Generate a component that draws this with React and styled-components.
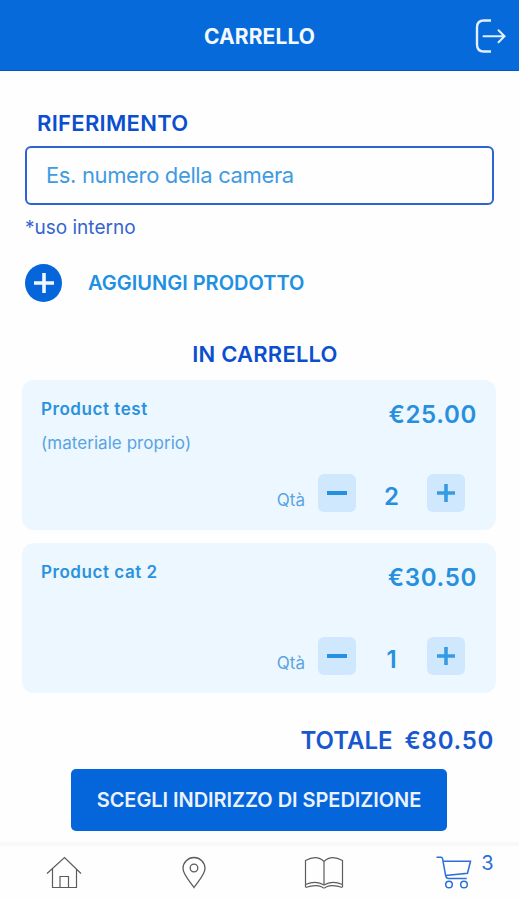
import React, { useState } from "react";
import styled, { createGlobalStyle } from "styled-components";

const GlobalStyle = createGlobalStyle`
    * {
        box-sizing: border-box;
    }

    body {
        margin: 0;
        background: #fefefe;
        font-family: Inter, "Liberation Sans", sans-serif;
    }

    button {
        font-family: inherit;
        border: none;
        padding: 0;
    }
`;

const Screen = styled.div`
    display: flex;
    flex-direction: column;
    width: 519px;
    height: 900px;
    overflow: hidden;
`;

const Header = styled.header`
    display: grid;
    grid-template-columns: 60px 1fr 60px;
    align-items: center;
    flex: none;
    height: 71px;
    padding-top: 2px;
    background: #076adb;
    border-bottom: 1px solid #0557c8;
`;

const HeaderTitle = styled.h1`
    grid-column: 2;
    margin: 0;
    text-align: center;
    color: #f4f9ff;
    font-size: 21px;
    font-weight: 700;
    letter-spacing: 0.1px;
`;

const LogoutButton = styled.button`
    display: flex;
    justify-content: flex-end;
    padding-right: 12px;
    background: none;
`;

const Main = styled.main`
    flex: 1;
    padding: 38px 23px 0 22px;
`;

const Label = styled.label`
    display: block;
    padding-left: 15px;
    color: #0b4fcf;
    font-size: 22px;
    font-weight: 600;
    line-height: 28px;
    letter-spacing: 0.3px;
`;

const ReferenceInput = styled.input`
    display: block;
    width: 469px;
    height: 59px;
    margin: 9px 0 0 3px;
    padding: 0 19px 2px;
    border: 2px solid #2f62d3;
    border-radius: 6px;
    background: #fefefe;
    font-family: inherit;
    font-size: 22px;
    letter-spacing: -0.36px;

    &::placeholder {
        color: #3f9be2;
        opacity: 1;
    }
`;

const Hint = styled.div`
    margin: 11px 0 0 3px;
    color: #3464d2;
    font-size: 19px;
    line-height: 24px;
`;

const AddProduct = styled.button`
    display: flex;
    align-items: center;
    gap: 26px;
    margin: 24px 0 0 3px;
    background: none;
    color: #2090e2;
    font-size: 20px;
    font-weight: 600;
`;

const AddCircle = styled.span`
    display: flex;
    align-items: center;
    justify-content: center;
    width: 37px;
    height: 38px;
    border-radius: 50%;
    background: #0565da;
`;

const SectionTitle = styled.h2`
    margin: 38px 0 12px 12px;
    color: #0b4fcf;
    font-size: 22px;
    font-weight: 600;
    line-height: 28px;
    letter-spacing: 0.2px;
    text-align: center;
`;

const CartList = styled.div`
    display: flex;
    flex-direction: column;
    gap: 13px;
`;

const Card = styled.article`
    display: flex;
    flex-direction: column;
    justify-content: space-between;
    height: 150px;
    padding: 18px 19px 18px;
    border-radius: 12px;
    background: #ecf7ff;
`;

const CardTop = styled.div`
    display: flex;
    justify-content: space-between;
`;

const ProductName = styled.div`
    color: #2b92de;
    font-size: 17px;
    font-weight: 600;
    line-height: 22px;
    letter-spacing: 0.55px;
`;

const ProductNote = styled.div`
    margin-top: 12px;
    color: #5aa3e2;
    font-size: 17px;
    line-height: 22px;
    letter-spacing: 0.05px;
`;

const Price = styled.div`
    padding-top: 2px;
    color: #2790de;
    font-size: 24px;
    font-weight: 600;
    line-height: 30px;
    letter-spacing: 0.7px;
`;

const QuantityRow = styled.div`
    display: flex;
    align-items: center;
    justify-content: flex-end;
    padding-right: 12px;
`;

const QuantityLabel = styled.span`
    margin: 14px 13px 0 0;
    color: #5ba4e2;
    font-size: 17px;
    line-height: 22px;
`;

const StepButton = styled.button`
    display: flex;
    align-items: center;
    justify-content: center;
    width: 38px;
    height: 38px;
    border-radius: 6px;
    background: #d0e8fe;
`;

const Quantity = styled.span`
    width: 71px;
    padding-top: 8px;
    color: #2790de;
    font-size: 24px;
    font-weight: 600;
    line-height: 30px;
    text-align: center;
`;

const Total = styled.div`
    display: flex;
    justify-content: flex-end;
    gap: 12px;
    margin-top: 33px;
    padding-right: 2px;
    color: #1858ce;
    font-size: 24px;
    font-weight: 600;
    line-height: 30px;
`;

const TotalValue = styled.span`
    letter-spacing: 0.7px;
`;

const SubmitButton = styled.button`
    display: block;
    width: 376px;
    height: 62px;
    margin: 13px 0 0 49px;
    border-radius: 5px;
    background: #0565da;
    color: #eaf3ff;
    font-size: 20px;
    font-weight: 600;
    letter-spacing: -0.05px;
`;

const NavBar = styled.nav`
    display: grid;
    grid-template-columns: repeat(4, 130px);
    flex: none;
    height: 58px;
    border-top: 4px solid #f8f8f8;
`;

const NavItem = styled.a`
    display: flex;
    justify-content: center;
    padding-top: 10px;
    padding-left: ${(props) => props.$offset || 0}px;
    padding-right: 2px;
    color: ${(props) => (props.$active ? "#2b6fd8" : "#5c5c5c")};
`;

const CartCount = styled.span`
    margin: -5px 0 0 9px;
    font-size: 20px;
    line-height: 24px;
`;

const LogoutIcon = () => (
    <svg width="34" height="36" viewBox="0 0 34 36" fill="none" stroke="#e3efff" strokeWidth="2.400">
        <path d="M18 2.500h-7Q4 2.500 4 9.500v17q0 7 7 7h7" />
        <path d="M10.500 18.200h21M25.500 12.200l6 6-6 6" strokeWidth="2" strokeLinecap="round" />
    </svg>
);

const PlusIcon = ({ size, color, width }) => (
    <svg width={size} height={size} viewBox="0 0 20 20" fill="none" stroke={color} strokeWidth={width}>
        <path d="M10 0v20M0 10h20" />
    </svg>
);

const MinusIcon = () => (
    <svg width="20" height="4" viewBox="0 0 20 4">
        <rect width="20" height="4" fill="#278fdf" />
    </svg>
);

const HomeIcon = () => (
    <svg width="36" height="34" viewBox="0 0 36 34" fill="none" stroke="currentColor" strokeWidth="1.200">
        <path d="M1 17.500L18.500 1.500 35 17.500M6.500 12.500v19h24v-19M14 31.500V20.500h8.500v11" />
    </svg>
);

const PinIcon = () => (
    <svg width="24" height="34" viewBox="0 0 24 34" fill="none" stroke="currentColor" strokeWidth="1.300">
        <path d="M12 31.500C8 25.500 1 18.500 1 12.500a11 11 0 0 1 22 0C23 18.500 16 25.500 12 31.500z" />
        <circle cx="12" cy="12" r="3.800" />
    </svg>
);

const BookIcon = () => (
    <svg width="40" height="34" viewBox="0 0 40 34" fill="none" stroke="currentColor" strokeWidth="1.200">
        <path d="M20 5.500C15 .5 8 1 1.500 4.500V31M20 5.500C25 .5 32 1 38.500 4.500V31M20 5.500v23" />
        <path d="M1.500 28.500c6-2.500 13-3 18.500.5C25.500 25.500 32.500 26 38.500 28.500M1.500 31.500c6-2 12-2.500 16.500-.5 1 1.300 3 1.300 4 0 4.500-2 10.500-1.500 16.500.5" />
    </svg>
);

const CartIcon = () => (
    <svg width="36" height="34" viewBox="0 0 36 34" fill="none" stroke="currentColor" strokeWidth="1.500">
        <path d="M.5 1.200h4.500q1.300 0 1.600 1.600l3.100 17q.6 2.700 3 2.700h18M7.200 5.200H34.500l-3 12-21.700 2.300" />
        <circle cx="13" cy="28.500" r="3.300" />
        <circle cx="28" cy="28.500" r="3.300" />
    </svg>
);

const initialItems = [
    { id: 1, name: "Product test", note: "(materiale proprio)", price: 25, quantity: 2 },
    { id: 2, name: "Product cat 2", note: "", price: 30.5, quantity: 1 },
];

const CartItem = ({ item, onChange }) => (
    <Card>
        <CardTop>
            <div>
                <ProductName>{item.name}</ProductName>
                {item.note && <ProductNote>{item.note}</ProductNote>}
            </div>
            <Price>€{item.price.toFixed(2)}</Price>
        </CardTop>
        <QuantityRow>
            <QuantityLabel>Qtà</QuantityLabel>
            <StepButton onClick={() => onChange(item.id, -1)}>
                <MinusIcon />
            </StepButton>
            <Quantity>{item.quantity}</Quantity>
            <StepButton onClick={() => onChange(item.id, 1)}>
                <PlusIcon size={18} color="#369be4" width={4} />
            </StepButton>
        </QuantityRow>
    </Card>
);

export default function App() {
    const [items, setItems] = useState(initialItems);

    const changeQuantity = (id, step) => {
        setItems(items.map((item) => (item.id === id ? { ...item, quantity: Math.max(0, item.quantity + step) } : item)));
    };

    const total = items.reduce((sum, item) => sum + item.price * item.quantity, 0);
    const count = items.reduce((sum, item) => sum + item.quantity, 0);

    return (
        <>
            <GlobalStyle />
            <Screen>
                <Header>
                    <HeaderTitle>CARRELLO</HeaderTitle>
                    <LogoutButton>
                        <LogoutIcon />
                    </LogoutButton>
                </Header>
                <Main>
                    <Label htmlFor="reference">RIFERIMENTO</Label>
                    <ReferenceInput id="reference" placeholder="Es. numero della camera" />
                    <Hint>*uso interno</Hint>
                    <AddProduct>
                        <AddCircle>
                            <PlusIcon size={20} color="#f2f8ff" width={3.6} />
                        </AddCircle>
                        AGGIUNGI PRODOTTO
                    </AddProduct>
                    <SectionTitle>IN CARRELLO</SectionTitle>
                    <CartList>
                        {items.map((item) => (
                            <CartItem key={item.id} item={item} onChange={changeQuantity} />
                        ))}
                    </CartList>
                    <Total>
                        <span>TOTALE</span>
                        <TotalValue>€{total.toFixed(2)}</TotalValue>
                    </Total>
                    <SubmitButton>SCEGLI INDIRIZZO DI SPEDIZIONE</SubmitButton>
                </Main>
                <NavBar>
                    <NavItem>
                        <HomeIcon />
                    </NavItem>
                    <NavItem>
                        <PinIcon />
                    </NavItem>
                    <NavItem>
                        <BookIcon />
                    </NavItem>
                    <NavItem $active $offset={22}>
                        <CartIcon />
                        <CartCount>{count}</CartCount>
                    </NavItem>
                </NavBar>
            </Screen>
        </>
    );
}
